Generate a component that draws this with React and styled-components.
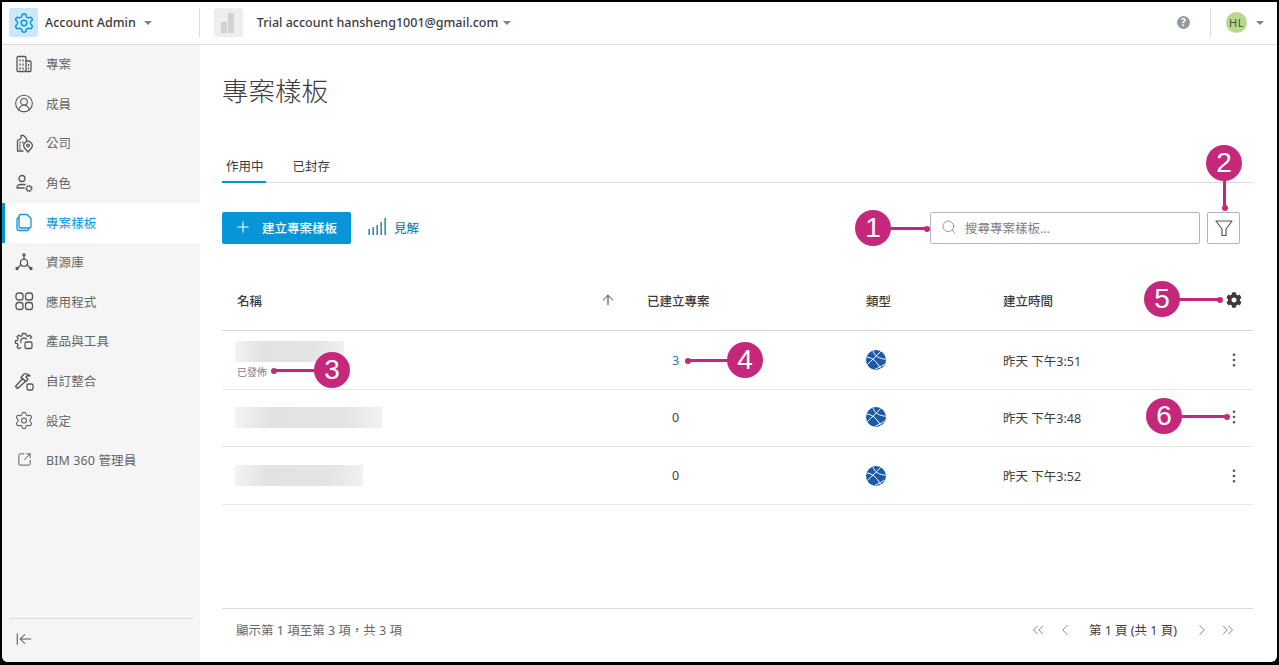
import styled, { createGlobalStyle } from 'styled-components';
import {
  ArrowLeftToLine,
  ArrowUp,
  ChevronLeft,
  ChevronRight,
  ChevronsLeft,
  ChevronsRight,
  CircleUserRound,
  EllipsisVertical,
  Plus,
  Search,
  Settings,
  SquareArrowOutUpRight,
} from 'lucide-react';
import { FaCog } from 'react-icons/fa';

const FONT = `"Noto Sans", "Noto Sans CJK TC", sans-serif`;
const MAGENTA = '#c5287a';

const GlobalStyle = createGlobalStyle`
  html, body {
    margin: 0;
    padding: 0;
    background: #000;
    overflow: hidden;
  }
  * { box-sizing: border-box; }
`;

const Frame = styled.div`
  position: relative;
  width: 1275px;
  height: 660px;
  margin: 2px 0 0 2px;
  background: #fff;
  border-radius: 0 0 6px 6px;
  overflow: hidden;
  display: flex;
  flex-direction: column;
  font-family: ${FONT};
  color: #3c3c3c;
`;

const Header = styled.header`
  flex: 0 0 43px;
  display: flex;
  align-items: center;
  border-bottom: 1px solid #dcdcdc;
  padding: 0 13px 1px 7px;
`;

const LogoTile = styled.div`
  width: 29px;
  height: 29px;
  border-radius: 3px;
  display: flex;
  align-items: center;
  justify-content: center;
  background: ${(p) => (p.$muted ? '#eeeeee' : '#c9e9f8')};
  color: #0696d7;
`;

const HeaderLabel = styled.span`
  font-size: 12.5px;
  font-weight: 500;
  margin-left: ${(p) => p.$gap}px;
  color: #3c3c3c;
  white-space: nowrap;
`;

const Caret = styled.span`
  width: 0;
  height: 0;
  margin-left: ${(p) => p.$gap}px;
  border-left: 4px solid transparent;
  border-right: 4px solid transparent;
  border-top: 4px solid #808080;
`;

const HeaderDivider = styled.span`
  width: 1px;
  height: 29px;
  background: #dcdcdc;
  margin: ${(p) => p.$margin};
`;

const Spacer = styled.div`
  flex: 1;
`;

const HelpIcon = styled.span`
  width: 13px;
  height: 13px;
  border-radius: 50%;
  background: #999;
  color: #fff;
  font-size: 10px;
  font-weight: 700;
  line-height: 13px;
  text-align: center;
`;

const Avatar = styled.span`
  width: 21px;
  height: 21px;
  border-radius: 50%;
  background: #b7d98c;
  color: #44503a;
  font-size: 11px;
  line-height: 21px;
  text-align: center;
  letter-spacing: 0.6px;
`;

const Body = styled.div`
  flex: 1;
  display: flex;
  min-height: 0;
`;

const Sidebar = styled.nav`
  flex: 0 0 198px;
  display: flex;
  flex-direction: column;
  background: #f5f5f5;
`;

const NavItem = styled.div`
  height: 39.6px;
  display: flex;
  align-items: center;
  gap: 12px;
  padding-left: ${(p) => (p.$active ? '9px' : '12px')};
  padding-bottom: 2px;
  font-size: 12.5px;
  background: ${(p) => (p.$active ? '#fff' : 'transparent')};
  border-left: ${(p) => (p.$active ? '3px solid #0696d7' : 'none')};
  color: ${(p) => (p.$active ? '#0696d7' : '#666')};
  letter-spacing: 0.1px;
  white-space: nowrap;
`;

const NavIcon = styled.span`
  width: 20px;
  height: 20px;
  display: flex;
  align-items: center;
  justify-content: center;
  color: ${(p) => (p.$active ? '#0696d7' : '#555')};
`;

const SidebarFoot = styled.div`
  margin: auto 7px 0;
  height: 44px;
  border-top: 1px solid #dcdcdc;
  padding: 11px 0 0 6px;
  color: #555;
  display: flex;
  align-items: flex-start;
`;

const Main = styled.main`
  flex: 1;
  min-width: 0;
  display: flex;
  flex-direction: column;
  padding: 0 23px 0 22px;
`;

const Title = styled.h1`
  margin: 28px 0 0;
  font-size: 26.5px;
  line-height: 36px;
  font-weight: 300;
  color: #3c3c3c;
`;

const Tabs = styled.div`
  margin-top: 45px;
  height: 29px;
  display: flex;
  gap: 27px;
  border-bottom: 1px solid #dcdcdc;
`;

const Tab = styled.div`
  height: 29px;
  padding: ${(p) => (p.$active ? '0 2px 0 4px' : '0')};
  font-size: 12.5px;
  line-height: 26px;
  color: #3c3c3c;
  border-bottom: 2px solid ${(p) => (p.$active ? '#0696d7' : 'transparent')};
`;

const Toolbar = styled.div`
  margin-top: 29px;
  padding-right: 14px;
  display: flex;
  align-items: center;
`;

const PrimaryButton = styled.button`
  width: 129px;
  height: 32px;
  border: none;
  border-radius: 2px;
  background: #0696d7;
  color: #fff;
  display: flex;
  align-items: center;
  gap: 10px;
  padding: 0 0 2px 12px;
  font-family: inherit;
  font-size: 12.5px;
  font-weight: 500;
`;

const InsightLink = styled.div`
  display: flex;
  align-items: center;
  gap: 8px;
  margin: 0 0 2px 17px;
  color: #0672a3;
  font-size: 12.5px;
`;

const SearchBox = styled.div`
  width: 270px;
  height: 32px;
  border: 1px solid #b5b5b5;
  border-radius: 2px;
  display: flex;
  align-items: center;
  gap: 8px;
  padding: 0 0 2px 10px;
  font-size: 12.5px;
  color: #808080;
`;

const FilterButton = styled.div`
  width: 33px;
  height: 32px;
  margin-left: 7px;
  border: 1px solid #b5b5b5;
  border-radius: 2px;
  display: flex;
  align-items: center;
  justify-content: center;
  color: #555;
`;

const Table = styled.div`
  margin: 28px 1px 0 0;
`;

const Row = styled.div`
  display: grid;
  grid-template-columns: 410px 219px 137px 142px 1fr;
  align-items: center;
  height: ${(p) => p.$height}px;
  border-bottom: ${(p) => (p.$head ? '1px solid #d4d4d4' : '1px solid #e8e8e8')};
  font-size: 12.5px;
  font-weight: ${(p) => (p.$head ? 500 : 400)};
  padding-bottom: ${(p) => p.$lift || 0}px;
`;

const Cell = styled.div`
  padding-left: ${(p) => p.$pad ?? 15}px;
  display: flex;
  align-items: center;
  white-space: nowrap;
  color: ${(p) => p.$color || '#3c3c3c'};
`;

const NameCell = styled.div`
  padding-left: 13px;
  display: flex;
  flex-direction: column;
  align-items: flex-start;
`;

const BlurredName = styled.div`
  height: 21px;
  width: ${(p) => p.$width}px;
  background: linear-gradient(90deg, #f3f3f3, #e2e2e2 25%, #e4e4e4 75%, #f1f1f1);
`;

const Status = styled.span`
  font-size: 10px;
  line-height: 14px;
  margin: 3px 0 0 2px;
  color: #808080;
`;

const ActionCell = styled.div`
  display: flex;
  justify-content: flex-end;
  padding-right: ${(p) => p.$right}px;
  color: #555;
`;

const Footer = styled.footer`
  margin-top: auto;
  height: 54px;
  border-top: 1px solid #dcdcdc;
  display: flex;
  align-items: center;
  justify-content: space-between;
  padding: 0 17px 12px 14px;
  font-size: 12.5px;
  color: #666;
`;

const Pager = styled.div`
  display: flex;
  align-items: center;
  color: #808080;
`;

const PageLabel = styled.span`
  margin: 0 16px 0 15px;
  color: #3c3c3c;
`;

const PagerIcon = styled.span`
  display: flex;
  margin-right: ${(p) => p.$gap || 0}px;
`;

/* numbered markers over the screenshot */
const Bubble = styled.div`
  position: absolute;
  left: ${(p) => p.$x - 2}px;
  top: ${(p) => p.$y - 2}px;
  width: 36px;
  height: 36px;
  border-radius: 50%;
  background: ${MAGENTA};
  color: #fff;
  font-family: "Liberation Sans", Arial, sans-serif;
  font-size: 28px;
  line-height: 36px;
  text-align: center;
`;

const Leader = styled.div`
  position: absolute;
  background: ${MAGENTA};
  left: ${(p) => p.$x - 2}px;
  top: ${(p) => p.$y - 2}px;
  width: ${(p) => (p.$down ? 3 : p.$len)}px;
  height: ${(p) => (p.$down ? p.$len : 3)}px;
  &::after {
    content: '';
    position: absolute;
    width: 6px;
    height: 6px;
    border-radius: 50%;
    background: ${MAGENTA};
    ${(p) => {
      if (p.$down) return 'left: -1.5px; bottom: -3px;';
      return p.$dotLeft ? 'left: -3px; top: -1.5px;' : 'right: -3px; top: -1.5px;';
    }}
  }
`;

const Line = ({ children, size = 20 }) => (
  <svg width={size} height={size} viewBox="0 0 20 20" fill="none" stroke="currentColor" strokeWidth="1.3" strokeLinecap="round" strokeLinejoin="round">
    {children}
  </svg>
);

const navItems = [
  {
    label: '專案',
    icon: (
      <Line>
        <rect x="3" y="2.5" width="9" height="15" rx="1.2" />
        <path d="M12 7h4a1 1 0 0 1 1 1v8.5a1 1 0 0 1-1 1h-4" />
        <path d="M6 6v1M9 6v1M6 10v1M9 10v1M6 14v1M9 14v1M14.5 10.5v1M14.5 14v1" />
      </Line>
    ),
  },
  { label: '成員', icon: <CircleUserRound size={21} strokeWidth={1.3} /> },
  {
    label: '公司',
    icon: (
      <Line>
        <path d="M9 18H3.5V7.5L7 5.5V2.5h2.5l3 3v2.5" />
        <path d="M6 9v1M6 12v1M6 15v1M9 9v1" />
        <path d="M14 19l-3.4-4a4.2 4.2 0 1 1 6.8 0z" />
        <circle cx="14" cy="12.5" r="1.3" />
      </Line>
    ),
  },
  {
    label: '角色',
    icon: (
      <Line>
        <circle cx="8" cy="5.5" r="3" />
        <path d="M11 11.5H6.5a3.5 3.5 0 0 0-3.5 3.5h7" />
        <circle cx="15" cy="15.5" r="2.6" strokeWidth="2" strokeDasharray="1.6 0.7" strokeLinecap="butt" />
      </Line>
    ),
  },
  {
    label: '專案樣板',
    active: true,
    icon: (
      <Line>
        <path d="M7 2.5h6l4 4V14a2 2 0 0 1-2 2H7a2 2 0 0 1-2-2V4.5a2 2 0 0 1 2-2z" />
        <path d="M5 5.5A2.5 2.5 0 0 0 3 8v8a2.5 2.5 0 0 0 2.5 2.5H13a2.5 2.5 0 0 0 2-1.5" />
      </Line>
    ),
  },
  {
    label: '資源庫',
    icon: (
      <Line>
        <circle cx="10" cy="2.8" r="1" fill="currentColor" />
        <circle cx="3" cy="16.5" r="1" fill="currentColor" />
        <circle cx="17" cy="16.5" r="1" fill="currentColor" />
        <circle cx="10" cy="10.8" r="3.6" />
        <path d="M10 3.5v3.7M7 13l-3.3 3M13 13l3.3 3" />
      </Line>
    ),
  },
  {
    label: '應用程式',
    icon: (
      <Line>
        <rect x="2" y="2" width="7" height="7" rx="2.6" />
        <rect x="11.5" y="2" width="7" height="7" rx="2.6" />
        <rect x="2" y="11.5" width="7" height="7" rx="2.6" />
        <rect x="11.5" y="11.5" width="7" height="7" rx="2.6" />
      </Line>
    ),
  },
  {
    label: '產品與工具',
    icon: (
      <Line>
        <path d="M11 2.5H8.5L8 4.6l-1.6.7L4.6 4.2 3 5.9l1.1 1.8-.7 1.6-2 .5v2.4l2 .5.7 1.6L3 16.1l1.7 1.6 1.8-1.1" />
        <path d="M12 2.7l.5 1.9 1.6.7 1.8-1.1 1.6 1.7-1 1.6" />
        <path d="M7 11.5a3.2 3.2 0 0 1 3-4.5c1 0 1.9.4 2.5 1.1" />
        <rect x="11" y="11" width="7" height="6.5" rx="1.6" />
      </Line>
    ),
  },
  {
    label: '自訂整合',
    icon: (
      <Line>
        <path d="M1.5 15.5l7-8 3 3-8 7z" />
        <path d="M7 6.5l3-3.5c2.5-.8 4.5 0 6 2l-3-.3-1 1.3 2 2.3-2 2.2z" />
        <rect x="13" y="13" width="6" height="6" rx="1.6" />
      </Line>
    ),
  },
  { label: '設定', icon: <Settings size={21} strokeWidth={1.25} /> },
  { label: 'BIM 360 管理員', icon: <SquareArrowOutUpRight size={15} strokeWidth={1.5} /> },
];

const rows = [
  { width: 109, status: '已發佈', count: '3', time: '昨天 下午3:51', height: 59, lift: 0 },
  { width: 147, count: '0', time: '昨天 下午3:48', height: 57, lift: 2 },
  { width: 128, count: '0', time: '昨天 下午3:52', height: 58, lift: 0 },
];

const Globe = () => (
  <svg width="20" height="20" viewBox="0 0 20 20">
    <circle cx="10" cy="10" r="10" fill="#1a5aa8" />
    <path d="M1 7c5 .5 10 4.500 13.500 11.500M1.500 14.500c4-4.500 9-8 13-13M7 .8c.5 2 2 4.500 4.500 6s5 2 8 2.500M9 19.500c2-1.500 6-2.500 9.500-5.500" fill="none" stroke="#fff" strokeWidth="1" />
  </svg>
);

const Insight = () => (
  <svg width="18" height="18" viewBox="0 0 18 18" fill="#0672a3">
    <rect x="0.5" y="11" width="1.3" height="6" />
    <rect x="4.500" y="9" width="1.300" height="8" />
    <rect x="8.500" y="7" width="1.300" height="10" />
    <rect x="12.500" y="4" width="1.300" height="13" />
    <rect x="16.500" y="0" width="1.300" height="17" />
  </svg>
);

const Funnel = () => (
  <svg width="18" height="18" viewBox="0 0 18 18" fill="none" stroke="currentColor" strokeWidth="1.2" strokeLinejoin="round">
    <path d="M1 2h16L11 10v6.500H7V10z" />
  </svg>
);

const markers = [
  { n: 1, x: 855, y: 210, lx: 889, ly: 227, len: 38 },
  { n: 2, x: 1206, y: 145, lx: 1223, ly: 179, len: 29, down: true },
  { n: 3, x: 314, y: 352, lx: 274, ly: 369, len: 42, dotLeft: true },
  { n: 4, x: 727, y: 342, lx: 688, ly: 359, len: 42, dotLeft: true },
  { n: 5, x: 1144, y: 281, lx: 1178, ly: 298, len: 42 },
  { n: 6, x: 1146, y: 398, lx: 1180, ly: 415, len: 47 },
];

export default function App() {
  return (
    <>
      <GlobalStyle />
      <Frame>
        <Header>
          <LogoTile>
            <Settings size={22} strokeWidth={1.6} />
          </LogoTile>
          <HeaderLabel $gap={7}>Account Admin</HeaderLabel>
          <Caret $gap={8} />
          <HeaderDivider $margin="0 14px 0 47px" />
          <LogoTile $muted>
            <svg width="14" height="20" viewBox="0 0 14 20" fill="#d2d2d2">
              <rect x="0" y="9" width="6" height="11" />
              <rect x="7" y="0" width="6" height="20" />
            </svg>
          </LogoTile>
          <HeaderLabel $gap={14}>Trial account hansheng1001@gmail.com</HeaderLabel>
          <Caret $gap={5} />
          <Spacer />
          <HelpIcon>?</HelpIcon>
          <HeaderDivider $margin="0 15px 0 20px" />
          <Avatar>HL</Avatar>
          <Caret $gap={9} />
        </Header>
        <Body>
          <Sidebar>
            {navItems.map((item) => (
              <NavItem key={item.label} $active={item.active}>
                <NavIcon $active={item.active}>{item.icon}</NavIcon>
                {item.label}
              </NavItem>
            ))}
            <SidebarFoot>
              <ArrowLeftToLine size={18} strokeWidth={1.4} />
            </SidebarFoot>
          </Sidebar>
          <Main>
            <Title>專案樣板</Title>
            <Tabs>
              <Tab $active>作用中</Tab>
              <Tab>已封存</Tab>
            </Tabs>
            <Toolbar>
              <PrimaryButton>
                <Plus size={18} strokeWidth={1.4} />
                建立專案樣板
              </PrimaryButton>
              <InsightLink>
                <Insight />
                見解
              </InsightLink>
              <Spacer />
              <SearchBox>
                <Search size={16} strokeWidth={1.2} />
                搜尋專案樣板...
              </SearchBox>
              <FilterButton>
                <Funnel />
              </FilterButton>
            </Toolbar>
            <Table>
              <Row $head $height={59} $lift={2}>
                <Cell $pad={15}>
                  名稱
                  <Spacer />
                  <ArrowUp size={16} strokeWidth={1.5} style={{ marginRight: 16 }} />
                </Cell>
                <Cell>已建立專案</Cell>
                <Cell>類型</Cell>
                <Cell>建立時間</Cell>
                <ActionCell $right={11}>
                  <FaCog size={16} color="#3c3c3c" />
                </ActionCell>
              </Row>
              {rows.map((row) => (
                <Row key={row.time} $height={row.height} $lift={row.lift}>
                  <NameCell>
                    <BlurredName $width={row.width} />
                    {row.status && <Status>{row.status}</Status>}
                  </NameCell>
                  <Cell $pad={40} $color={row.count === '3' ? '#1a7fc0' : undefined}>
                    {row.count}
                  </Cell>
                  <Cell>
                    <Globe />
                  </Cell>
                  <Cell>{row.time}</Cell>
                  <ActionCell $right={10}>
                    <EllipsisVertical size={18} strokeWidth={1.6} />
                  </ActionCell>
                </Row>
              ))}
            </Table>
            <Footer>
              <span>顯示第 1 項至第 3 項，共 3 項</span>
              <Pager>
                <PagerIcon $gap={9}>
                  <ChevronsLeft size={18} strokeWidth={1.3} />
                </PagerIcon>
                <PagerIcon>
                  <ChevronLeft size={18} strokeWidth={1.3} />
                </PagerIcon>
                <PageLabel>第 1 頁 (共 1 頁)</PageLabel>
                <PagerIcon $gap={8}>
                  <ChevronRight size={18} strokeWidth={1.3} />
                </PagerIcon>
                <PagerIcon>
                  <ChevronsRight size={18} strokeWidth={1.3} />
                </PagerIcon>
              </Pager>
            </Footer>
          </Main>
        </Body>
        {markers.map((m) => (
          <div key={m.n}>
            <Leader $x={m.lx} $y={m.ly} $len={m.len} $down={m.down} $dotLeft={m.dotLeft} />
            <Bubble $x={m.x} $y={m.y}>{m.n}</Bubble>
          </div>
        ))}
      </Frame>
    </>
  );
}
